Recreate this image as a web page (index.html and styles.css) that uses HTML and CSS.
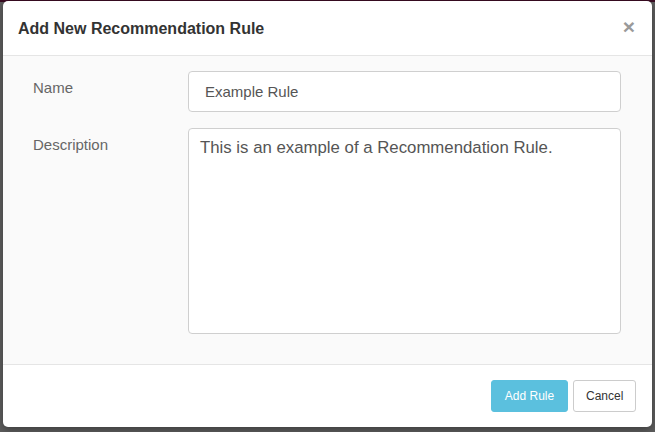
FILE: index.html
```html
<!DOCTYPE html>
<html>
<head>
<meta charset="utf-8">
<link rel="stylesheet" href="styles.css">
</head>
<body>
<div class="backdrop">
  <div class="modal">
    <div class="modal-header">
      <h4 class="modal-title">Add New Recommendation Rule</h4>
      <span class="close">&times;</span>
    </div>
    <div class="modal-body">
      <div class="form-row">
        <label class="form-label">Name</label>
        <div class="form-control input">Example Rule</div>
      </div>
      <div class="form-row">
        <label class="form-label">Description</label>
        <div class="form-control textarea">This is an example of a Recommendation Rule.</div>
      </div>
    </div>
    <div class="modal-footer">
      <button class="btn btn-info">Add Rule</button>
      <button class="btn btn-default">Cancel</button>
    </div>
  </div>
</div>
</body>
</html>
```
FILE: styles.css
```css
html, body {
  margin: 0;
  padding: 0;
  height: 100%;
}
body {
  background: #5e5e5e;
  font-family: "Liberation Sans", Arial, sans-serif;
  overflow: hidden;
}
.backdrop {
  border-top: 2px solid #3a0b22;
  padding: 0 3px;
}
.modal {
  margin-top: -1px;
  background: #fff;
  border-radius: 5px;
  overflow: hidden;
  box-shadow: 0 3px 8px rgba(0,0,0,0.35);
}
.modal-header {
  height: 55px;
  border-bottom: 1px solid #e5e5e5;
  display: flex;
  align-items: center;
  justify-content: space-between;
  padding: 0 17px 0 15px;
  box-sizing: border-box;
}
.modal-title {
  margin: 0;
  font-size: 16px;
  font-weight: bold;
  color: #333;
  padding-top: 2px;
}
.close {
  font-size: 21px;
  font-weight: bold;
  color: #9a9a9a;
  line-height: 1;
  margin-top: -3px;
}
.modal-body {
  background: #fafafa;
  padding: 15px 31px 30px 30px;
  display: flex;
  flex-direction: column;
  gap: 16px;
}
.form-row {
  display: flex;
  align-items: flex-start;
}
.form-label {
  width: 155px;
  flex: none;
  font-size: 15px;
  color: #666;
  padding-top: 8px;
}
.form-control {
  flex: 1;
  background: #fff;
  border: 1px solid #cfcfcf;
  border-radius: 4px;
  color: #555;
  font-size: 15px;
  box-sizing: border-box;
}
.input {
  height: 41px;
  padding: 11px 16px;
}
.textarea {
  height: 206px;
  padding: 9px 11px;
  font-size: 16.8px;
}
.modal-footer {
  border-top: 1px solid #e5e5e5;
  height: 63px;
  box-sizing: border-box;
  display: flex;
  justify-content: flex-end;
  align-items: center;
  gap: 5px;
  padding: 0 16px 0 0;
}
.btn {
  font-family: "Liberation Sans", Arial, sans-serif;
  font-size: 12px;
  height: 32px;
  border-radius: 3px;
  padding: 0 12px;
  cursor: pointer;
}
.btn-info {
  background: #5bc0de;
  border: 1px solid #5bc0de;
  color: #fff;
  width: 77px;
}
.btn-default {
  background: #fff;
  border: 1px solid #ccc;
  color: #333;
  width: 63px;
}
```
